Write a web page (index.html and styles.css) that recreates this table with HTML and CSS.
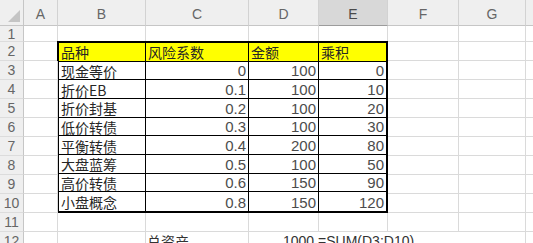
FILE: index.html
```html
<!DOCTYPE html>
<html>
<head>
<meta charset="utf-8">
<link rel="stylesheet" href="styles.css">
</head>
<body>
<div class="sheet">
  <div class="corner"><span class="tri"></span></div>
  <div class="ch">A</div><div class="ch">B</div><div class="ch">C</div><div class="ch">D</div><div class="ch sel">E</div><div class="ch">F</div><div class="ch">G</div><div class="ch"></div>

  <div class="rh">1</div><div class="c"></div><div class="c"></div><div class="c"></div><div class="c"></div><div class="c"></div><div class="c"></div><div class="c"></div><div class="c"></div>

  <div class="rh">2</div><div class="c"></div>
  <div class="tbl">
    <div class="t hd">品种</div><div class="t hd">风险系数</div><div class="t hd">金额</div><div class="t hd">乘积</div>
    <div class="t">现金等价</div><div class="t n">0</div><div class="t n">100</div><div class="t n">0</div>
    <div class="t">折价EB</div><div class="t n">0.1</div><div class="t n">100</div><div class="t n">10</div>
    <div class="t">折价封基</div><div class="t n">0.2</div><div class="t n">100</div><div class="t n">20</div>
    <div class="t">低价转债</div><div class="t n">0.3</div><div class="t n">100</div><div class="t n">30</div>
    <div class="t">平衡转债</div><div class="t n">0.4</div><div class="t n">200</div><div class="t n">80</div>
    <div class="t">大盘蓝筹</div><div class="t n">0.5</div><div class="t n">100</div><div class="t n">50</div>
    <div class="t">高价转债</div><div class="t n">0.6</div><div class="t n">150</div><div class="t n">90</div>
    <div class="t">小盘概念</div><div class="t n">0.8</div><div class="t n">150</div><div class="t n">120</div>
  </div>
  <div class="c"></div><div class="c"></div><div class="c"></div>
  <div class="rh">3</div><div class="c"></div><div class="c"></div><div class="c"></div><div class="c"></div>
  <div class="rh">4</div><div class="c"></div><div class="c"></div><div class="c"></div><div class="c"></div>
  <div class="rh">5</div><div class="c"></div><div class="c"></div><div class="c"></div><div class="c"></div>
  <div class="rh">6</div><div class="c"></div><div class="c"></div><div class="c"></div><div class="c"></div>
  <div class="rh">7</div><div class="c"></div><div class="c"></div><div class="c"></div><div class="c"></div>
  <div class="rh">8</div><div class="c"></div><div class="c"></div><div class="c"></div><div class="c"></div>
  <div class="rh">9</div><div class="c"></div><div class="c"></div><div class="c"></div><div class="c"></div>
  <div class="rh">10</div><div class="c"></div><div class="c"></div><div class="c"></div><div class="c"></div>

  <div class="rh">11</div><div class="c"></div><div class="c"></div><div class="c"></div><div class="c"></div><div class="c"></div><div class="c"></div><div class="c"></div><div class="c"></div>

  <div class="rh">12</div><div class="c"></div><div class="c"></div><div class="c txt">总资产</div><div class="c span txt">1000 =SUM(D3:D10)</div><div class="c"></div><div class="c"></div>
</div>
</body>
</html>
```
FILE: styles.css
```css
html, body {
  margin: 0;
  padding: 0;
  background: #fff;
  overflow: hidden;
}
.sheet {
  display: grid;
  grid-template-columns: 24px 34px 88px 103px 70px 69px 71px 67px 20px;
  grid-template-rows: 26px 16px repeat(11, 19px);
  width: 546px;
  font-family: "Noto Sans CJK SC", "Noto Sans", sans-serif;
  font-size: 14px;
  color: #1e1e1e;
}
.corner {
  background: #efefef;
  border-right: 1px solid #c6c6c6;
  border-bottom: 1px solid #c6c6c6;
  position: relative;
}
.tri {
  position: absolute;
  right: 3px;
  bottom: 3px;
  width: 12px;
  height: 12px;
  background: #c4c4c4;
  clip-path: polygon(100% 0, 100% 100%, 0 100%);
}
.ch {
  background: #efefef;
  border-right: 1px solid #d2d2d2;
  border-bottom: 1px solid #c6c6c6;
  display: flex;
  align-items: center;
  justify-content: center;
  color: #666;
  font-family: "Liberation Sans", "Noto Sans", sans-serif;
  font-size: 14px;
  padding-top: 3px;
}
.ch.sel {
  background: #d8d8d8;
  border-bottom: 1px solid #9c9c9c;
  color: #4a4a4a;
}
.rh {
  background: #efefef;
  border-right: 1px solid #c6c6c6;
  border-bottom: 1px solid #dcdcdc;
  display: flex;
  align-items: center;
  justify-content: center;
  color: #666;
  font-family: "Liberation Sans", "Noto Sans", sans-serif;
  font-size: 14px;
}
.c {
  border-right: 1px solid #dadada;
  border-bottom: 1px solid #dadada;
}
.txt {
  display: flex;
  align-items: flex-end;
  padding-left: 1px;
  line-height: 17px;
  white-space: nowrap;
  overflow: visible;
  color: #333;
}
.span {
  grid-column: span 3;
  padding-left: 34px;
  font-family: "Liberation Sans", sans-serif;
  border-right: 0;
}
.tbl {
  grid-column: 3 / 7;
  grid-row: 3 / 12;
  margin: -1px 0 0 -1px;
  border: 2px solid #000;
  display: grid;
  grid-template-columns: 87px 103px 70px 1fr;
  grid-template-rows: repeat(9, 1fr);
  background: #fff;
}
.t {
  border-right: 1px solid #000;
  border-bottom: 1px solid #000;
  display: flex;
  align-items: center;
  padding: 1px 2px 0 2px;
  white-space: nowrap;
  line-height: 1;
  color: #262626;
}
.t:nth-child(4n) { border-right: 0; }
.t:nth-last-child(-n+4) { border-bottom: 0; }
.hd {
  background: #ffff00;
}
.n {
  justify-content: flex-end;
  font-family: "Liberation Sans", "Noto Sans", sans-serif;
  font-size: 15px;
  color: #4c4c4c;
}
```
